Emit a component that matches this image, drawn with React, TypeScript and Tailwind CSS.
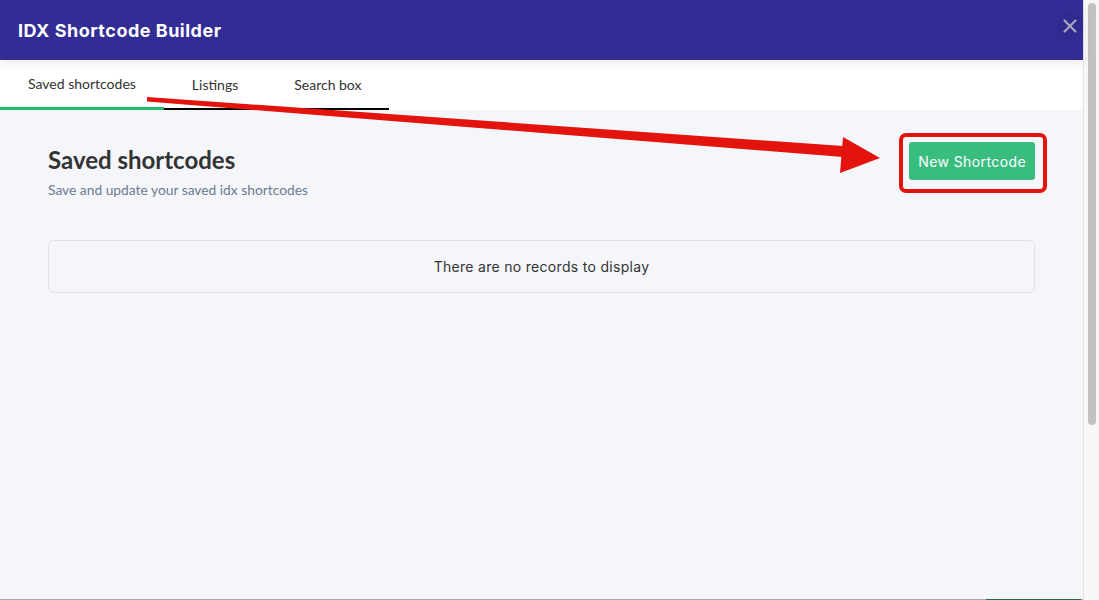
export default function App() {
  return (
    <div className="relative flex h-[600px] w-full overflow-hidden bg-white">
      {/* Modal panel */}
      <div className="flex w-[1083px] flex-col bg-[#f5f6fa]">
        {/* Header */}
        <header className="relative z-10 flex h-[60px] items-center bg-[#322c94] px-[18px] shadow-[0_4px_10px_rgba(0,0,0,0.08)]">
          <h1 className="font-['Inter',sans-serif] text-[18px] font-bold tracking-[0.5px] text-white">
            IDX Shortcode Builder
          </h1>
        </header>

        {/* Tabs */}
        <nav className="flex h-[50px] bg-white font-['Lato',sans-serif] text-[14px] text-[#333]">
          <div className="flex items-center border-b-[3px] border-[#27b86a] px-[28px]">Saved shortcodes</div>
          <div className="flex items-center border-b-2 border-black px-[28px]">Listings</div>
          <div className="flex items-center border-b-2 border-black px-[28px]">Search box</div>
          <div className="flex-1" />
        </nav>

        {/* Content */}
        <main className="flex-1 px-12 pt-[32px]">
          <div className="flex items-start justify-between">
            <div className="pt-[2px] font-['Lato',sans-serif]">
              <h2 className="text-[24px] font-bold leading-8 text-[#333]">Saved shortcodes</h2>
              <p className="mt-1 text-[13.8px] leading-5 text-[#6b7a91]">
                Save and update your saved idx shortcodes
              </p>
            </div>
            <button className="h-[38px] rounded-[3px] bg-[#38bd7f] px-[9px] font-['Inter',sans-serif] text-[14px] font-normal tracking-[0.4px] text-white">
              New Shortcode
            </button>
          </div>

          <div className="mt-[40px] flex h-[53px] items-center justify-center rounded-md border border-[#dfe1e6] font-['Inter',sans-serif] text-[14px] tracking-[0.3px] text-[#333]">
            There are no records to display
          </div>
        </main>

        <div className="flex h-px">
          <div className="flex-1 bg-[#a9a9a9]" />
          <div className="w-[95px] bg-[#1f6b45]" />
          <div className="w-[2px] bg-[#a9a9a9]" />
        </div>
      </div>

      {/* Scrollbar */}
      <div className="w-[16px] border-l border-[#e4e4e4] bg-[#f8f8f8]">
        <div className="ml-[4px] mt-[3px] h-[422px] w-[8px] rounded-full bg-[#c1c1c1]" />
      </div>

      {/* Close button */}
      <button className="absolute left-[1057px] top-[13px] z-20 flex h-[26px] w-[26px] items-center justify-center rounded-full bg-[#302a90]">
        <svg width="16" height="16" viewBox="0 0 16 16" fill="none" stroke="#a7a7b8" strokeWidth="2.2" strokeLinecap="round">
          <path d="M2.5 2.5 L13.5 13.5 M13.5 2.5 L2.5 13.5" />
        </svg>
      </button>

      {/* Annotation: red box around button */}
      <div className="pointer-events-none absolute left-[899px] top-[133px] z-20 h-[60px] w-[148px] rounded-[7px] border-[4px] border-[#e3140e]" />

      {/* Annotation: red arrow */}
      <svg className="pointer-events-none absolute left-0 top-0 z-20" width="1099" height="600">
        <polygon points="147,97 843,146 843,157 147,101.5" fill="#e3140e" />
        <polygon points="843,137 880,158 840,173" fill="#e3140e" />
      </svg>
    </div>
  );
}
